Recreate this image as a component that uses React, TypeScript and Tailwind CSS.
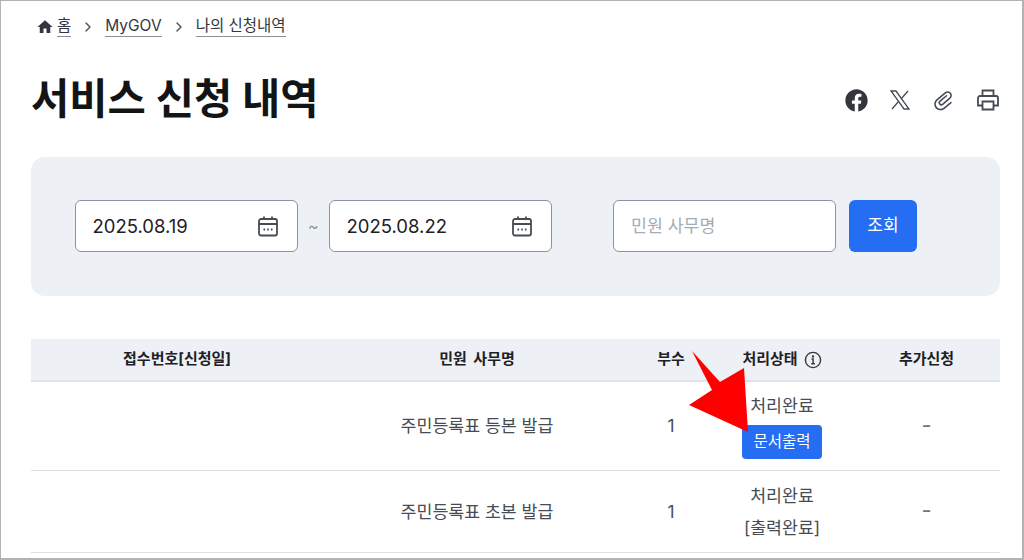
import React from "react";
import { ChevronRight } from "lucide-react";
import { FaFacebook } from "react-icons/fa";
import { MdHome } from "react-icons/md";

const CalendarIcon = () => (
    <svg width="22" height="22" viewBox="0 0 22 22" fill="none" stroke="#464c53" strokeWidth="1.8" className="shrink-0">
        <rect x="2" y="4" width="18" height="16.5" rx="2" />
        <path d="M2 9h18M7 1.5V5M15 1.5V5" />
        <path d="M6.5 14.5h1.6M10.2 14.5h1.6M13.9 14.5h1.6" />
    </svg>
);

const InfoIcon = () => (
    <svg width="18" height="18" viewBox="0 0 18 18" fill="none" stroke="#33363d" strokeWidth="1.4">
        <circle cx="9" cy="9" r="7.6" />
        <path d="M7.5 8h1.6v4.6M7.3 12.8h3.6" />
        <circle cx="9" cy="5.4" r="0.5" fill="#33363d" />
    </svg>
);

const XIcon = () => (
    <svg width="24" height="24" viewBox="0 0 24 24" fill="none" stroke="#464c53" strokeWidth="1.3">
        <path d="M3 3h5l13 18h-5z" />
        <path d="M20 3l-7 8M10.5 13.5L4 21" />
    </svg>
);

const ClipIcon = () => (
    <svg width="24" height="24" viewBox="0 0 24 24" fill="none" stroke="#464c53" strokeWidth="1.6" strokeLinecap="round">
        <path transform="rotate(-40 12 12.5)" d="M17 10.5H8.5a2 2 0 0 0 0 4H18a3.5 3.5 0 0 0 0-7H7a5.5 5.5 0 0 0 0 11H16" />
    </svg>
);

const PrintIcon = () => (
    <svg width="24" height="24" viewBox="0 0 24 24" fill="none" stroke="#464c53" strokeWidth="1.8">
        <path d="M6.5 8V2.5h11V8" />
        <path d="M6 17.5H2V10a2 2 0 0 1 2-2h16a2 2 0 0 1 2 2v7.5h-4" />
        <path d="M6.5 13.5h11v8h-11z" />
    </svg>
);

const Crumb = ({ children }: { children: React.ReactNode }) => (
    <a className="border-b border-[#8a8f96] text-[15.5px] leading-[20px] text-[#33363d]">{children}</a>
);

const DateField = ({ value }: { value: string }) => (
    <div className="flex h-[52px] w-[223.5px] items-center justify-between rounded-md border border-[#8a949e] bg-white pl-[17px] pr-[18px] text-[18.5px] text-[#1e2124]">
        <span className="pt-[1px]">{value}</span>
        <CalendarIcon />
    </div>
);

const Row = ({ name, status, height }: { name: string; status: React.ReactNode; height: string }) => (
    <div className={`grid grid-cols-[292px_308px_80px_142px_147px] items-center border-b border-[#dcdfe3] text-center text-[17.3px] text-[#464c53] ${height}`}>
        <div />
        <div>{name}</div>
        <div>1</div>
        <div className="flex flex-col items-center">{status}</div>
        <div className="pb-[3px] text-[22px] leading-none text-[#6d7882]">-</div>
    </div>
);

export default function App() {
    return (
        <div className="relative h-[560px] w-[1024px] overflow-hidden border border-r-2 border-b-2 border-[#b3b3b3] bg-white font-['Inter','Noto_Sans_CJK_KR',sans-serif]">
            <div className="flex h-[51px] items-center gap-[9px] pl-[35px]">
                <div className="flex items-center gap-[3px]">
                    <MdHome size={18} color="#33363d" />
                    <Crumb>홈</Crumb>
                </div>
                <ChevronRight size={16} color="#464c53" />
                <Crumb>MyGOV</Crumb>
                <ChevronRight size={16} color="#464c53" />
                <Crumb>나의 신청내역</Crumb>
            </div>

            <div className="flex h-[96px] items-center justify-between pl-[30px] pr-[22px]">
                <h1 className="text-[41.6px] font-bold leading-none text-[#131416]">서비스 신청 내역</h1>
                <div className="flex items-center gap-[20px] text-[#33363d]">
                    <FaFacebook size={23} />
                    <XIcon />
                    <ClipIcon />
                    <PrintIcon />
                </div>
            </div>

            <div className="ml-[30px] mt-[9px] flex h-[139px] w-[969px] items-center rounded-[14px] bg-[#edf0f5] pb-[1px] pl-[43.5px]">
                <DateField value="2025.08.19" />
                <span className="w-[30.5px] text-center text-[16px] text-[#8a949e]">~</span>
                <DateField value="2025.08.22" />
                <div className="ml-[61px] flex h-[52px] w-[223px] items-center rounded-md border border-[#8a949e] bg-white pl-[17px] text-[17.3px] text-[#a5abb3]">민원 사무명</div>
                <button className="ml-[13px] h-[52px] w-[68px] rounded-md bg-[#256ef4] text-[17px] text-white">조회</button>
            </div>

            <div className="ml-[30px] mt-[43px] w-[969px]">
                <div className="grid h-[43px] grid-cols-[292px_308px_80px_142px_147px] items-center border-b-2 border-[#dfe2e6] bg-[#edf0f5] text-center text-[15px] font-bold text-[#1e2124]">
                    <div>접수번호[신청일]</div>
                    <div className="[word-spacing:3px]">민원 사무명</div>
                    <div>부수</div>
                    <div className="flex items-center justify-center gap-[6px]">처리상태 <InfoIcon /></div>
                    <div>추가신청</div>
                </div>
                <Row
                    name="주민등록표 등본 발급"
                    height="h-[89px]"
                    status={
                        <>
                            <span className="leading-[24px]">처리완료</span>
                            <button className="mt-[7px] h-[34px] w-[80px] rounded-[4px] bg-[#256ef4] text-[15.5px] text-white">문서출력</button>
                        </>
                    }
                />
                <Row
                    name="주민등록표 초본 발급"
                    height="h-[82px]"
                    status={
                        <>
                            <span className="leading-[32px]">처리완료</span>
                            <span className="leading-[32px]">[출력완료]</span>
                        </>
                    }
                />
            </div>

            <svg width="70" height="90" viewBox="0 0 70 90" className="absolute left-[684px] top-[346px]" fill="#ff0000">
                <polygon points="7,4 35,35 59,21 63,85 4,58 27,43" />
            </svg>
        </div>
    );
}
